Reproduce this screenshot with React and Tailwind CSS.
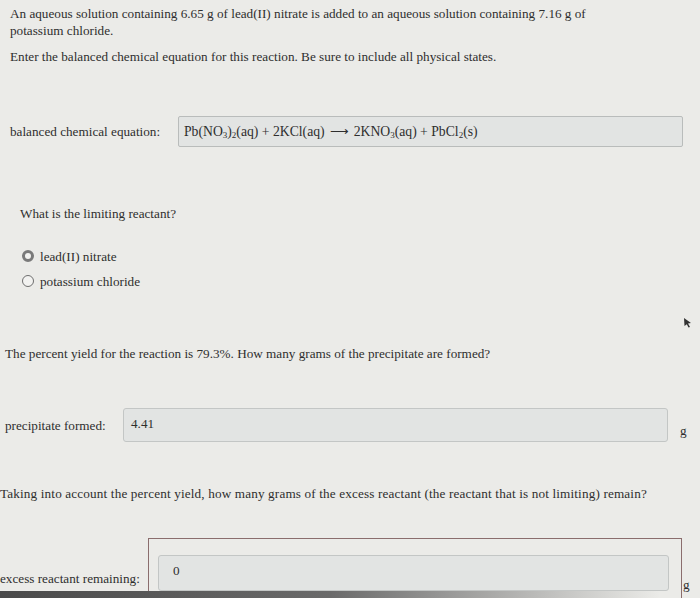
export default function App() {
    const text = 'text-[#2e2e2e]';

    return (
        <div
            className={`relative w-[700px] h-[598px] overflow-hidden bg-[#ebebe8] ${text} text-[13.2px] leading-[17px]`}
            style={{ fontFamily: '"Liberation Serif", "Times New Roman", serif' }}
        >
            {/* question intro */}
            <div className="pt-[5px] pl-[10px]">
                <p className="whitespace-nowrap">An aqueous solution containing 6.65 g of lead(II) nitrate is added to an aqueous solution containing 7.16 g of<br />potassium chloride.</p>
                <p className="mt-[9px]">Enter the balanced chemical equation for this reaction. Be sure to include all physical states.</p>
            </div>

            {/* equation */}
            <div className="flex items-center mt-[51px] pl-[10px]">
                <span className="w-[168px]">balanced chemical equation:</span>
                <div className="w-[505px] h-[31px] flex items-center px-[5px] bg-[#e2e4e3] border border-[#b9bcbb] rounded-[2px] text-[13.7px]">
                    <span>Pb(NO<sub className="text-[9px]">3</sub>)<sub className="text-[9px]">2</sub>(aq) + 2KCl(aq)</span>
                    <span className="mx-[5px] text-[13px]">⟶</span>
                    <span>2KNO<sub className="text-[9px]">3</sub>(aq) + PbCl<sub className="text-[9px]">2</sub>(s)</span>
                </div>
            </div>

            {/* limiting reactant */}
            <p className="mt-[58px] pl-[20px]">What is the limiting reactant?</p>
            <div className="mt-[25px] pl-[22px] flex flex-col gap-[7px]">
                <label className="flex items-center gap-[6px] h-[18px]">
                    <span className="w-[12px] h-[12px] rounded-full border-[3.5px] border-[#7a7a7a] bg-[#f2f2f0]" />
                    <span>lead(II) nitrate</span>
                </label>
                <label className="flex items-center gap-[6px] h-[18px]">
                    <span className="w-[12px] h-[12px] rounded-full border border-[#6e6e6e] bg-[#f2f2f0]" />
                    <span>potassium chloride</span>
                </label>
            </div>

            {/* precipitate */}
            <p className="mt-[55px] pl-[5px]">The percent yield for the reaction is 79.3%. How many grams of the precipitate are formed?</p>
            <div className="flex items-center mt-[46px] pl-[5px]">
                <span className="w-[118px]">precipitate formed:</span>
                <div className="w-[545px] h-[34px] flex items-start pt-[6px] px-[7px] bg-[#e2e4e3] border border-[#c3c6c5] rounded-[3px]">4.41</div>
                <span className="ml-[12px] mt-[10px]">g</span>
            </div>

            {/* excess reactant */}
            <p className="mt-[43px] whitespace-nowrap tracking-[0.15px]">Taking into account the percent yield, how many grams of the excess reactant (the reactant that is not limiting) remain?</p>
            <div className="flex mt-[36px]">
                <span className="w-[148px] pt-[32px] whitespace-nowrap">excess reactant remaining:</span>
                <div className="w-[534px] h-[70px] border border-[#8a6d6d] border-b-0 pt-[16px] pl-[9px]">
                    <div className="w-[511px] h-[36px] pt-[6px] px-[14px] bg-[#e2e4e3] border border-[#c3c6c5] rounded-[3px]">0</div>
                </div>
                <span className="ml-[1px] pt-[38px]">g</span>
            </div>

            {/* monitor bezel at bottom */}
            <div className="absolute left-0 bottom-0 w-[660px] h-[7px] bg-gradient-to-r from-[#4a4a4a] via-[#6a6a6a] to-transparent" />

            {/* mouse cursor */}
            <svg className="absolute left-[683px] top-[317px]" width="10" height="12" viewBox="0 0 10 12">
                <path d="M1 1 L8 6 L5 6.5 L7 10 L5.5 10.5 L3.8 7.2 L1.5 9 Z" fill="#333" />
            </svg>
        </div>
    );
}
